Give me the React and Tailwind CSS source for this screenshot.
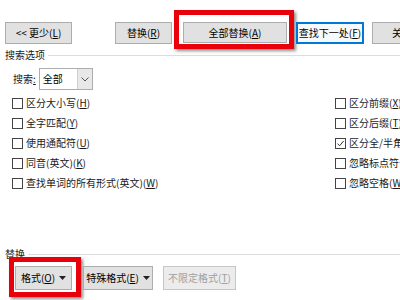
import React from "react";

const font = { fontFamily: '"Noto Sans CJK SC", "Noto Sans", sans-serif' };

function Btn({ children, className = "" }) {
  return (
    <div
      className={
        "flex shrink-0 items-center justify-center border border-[#adadad] bg-[#e1e1e1] text-[10px] text-black leading-none whitespace-nowrap " +
        className
      }
    >
      {children}
    </div>
  );
}

function Check({ label, checked }) {
  return (
    <div className="flex h-[20px] items-center whitespace-nowrap">
      <div className="flex h-[11px] w-[11px] shrink-0 items-center justify-center border border-[#444] bg-white">
        {checked && (
          <svg width="9" height="9" viewBox="0 0 9 9">
            <path d="M1.5 4.6 L3.6 6.8 L7.6 2" fill="none" stroke="#333" strokeWidth="1" />
          </svg>
        )}
      </div>
      <span className="ml-[3px] text-[10px] leading-none text-[#1a1a1a]">{label}</span>
    </div>
  );
}

function Caret() {
  return (
    <svg width="7" height="4" viewBox="0 0 7 4" className="ml-[4px]">
      <path d="M0 0 H7 L3.5 4 Z" fill="#222" />
    </svg>
  );
}

export default function App() {
  return (
    <div className="relative h-[300px] w-[400px] overflow-hidden bg-white" style={font}>
      {/* top buttons */}
      <div className="flex h-[49px] items-start">
        <Btn className="ml-[5px] mt-[22px] h-[22px] w-[67px]">
          &lt;&lt; 更少(<u>L</u>)
        </Btn>
        <Btn className="ml-[43px] mt-[22px] h-[22px] w-[57px]">
          替换(<u>R</u>)
        </Btn>
        <div className="ml-[2px] mt-[10px] shrink-0 border-[5px] border-[#e8000b] pb-[1px] pl-[4px] pr-[2px] pt-[7px] shadow-[2px_2px_3px_rgba(0,0,0,0.45)]">
          <Btn className="h-[21px] w-[104px]">
            全部替换(<u>A</u>)
          </Btn>
        </div>
        <div className="ml-[2px] mt-[22px] flex h-[22px] w-[68px] shrink-0 items-center justify-center border-2 border-[#0078d7] bg-[#f7fafd] text-[10px] leading-none whitespace-nowrap">
          查找下一处(<u>F</u>)
        </div>
        <Btn className="ml-[8px] mt-[22px] h-[22px] w-[60px]">
          关闭
        </Btn>
      </div>

      {/* search options header */}
      <div className="flex h-[12px] items-center pl-[5px]">
        <span className="text-[10px] leading-none text-[#1a1a1a]">搜索选项</span>
        <div className="ml-[3px] h-px flex-1 bg-[#dcdcdc]" />
      </div>

      {/* search select */}
      <div className="mt-[7px] flex h-[22px] items-center pl-[13px]">
        <span className="text-[10px] leading-none text-[#1a1a1a]">
          搜索<u>:</u>
        </span>
        <div className="ml-[3px] flex h-[22px] w-[54px] border border-[#adadad] bg-white">
          <div className="flex flex-1 items-center pl-[3px] text-[10px] leading-none">全部</div>
          <div className="flex w-[15px] items-center justify-center border-l border-[#cfcfcf] bg-[#e8e8e8]">
            <svg width="8" height="5" viewBox="0 0 8 5">
              <path d="M0.5 0.5 L4 4 L7.5 0.5" fill="none" stroke="#555" strokeWidth="1" />
            </svg>
          </div>
        </div>
      </div>

      {/* checkboxes */}
      <div className="mt-[3px] flex">
        <div className="flex flex-col pl-[12px]">
          <Check label={<>区分大小写(<u>H</u>)</>} />
          <Check label={<>全字匹配(<u>Y</u>)</>} />
          <Check label={<>使用通配符(<u>U</u>)</>} />
          <Check label={<>同音(英文)(<u>K</u>)</>} />
          <Check label={<>查找单词的所有形式(英文)(<u>W</u>)</>} />
        </div>
        <div className="ml-auto flex w-[65px] flex-col overflow-hidden">
          <Check label={<>区分前缀(<u>X</u>)</>} />
          <Check label={<>区分后缀(<u>T</u>)</>} />
          <Check label={<>区分全/半角(<u>M</u>)</>} checked />
          <Check label={<>忽略标点符号(<u>S</u>)</>} />
          <Check label={<>忽略空格(<u>W</u>)</>} />
        </div>
      </div>

      {/* replace header */}
      <div className="mt-[55px] flex h-[12px] items-center pl-[5px]">
        <span className="text-[10px] leading-none text-[#1a1a1a]">替换</span>
        <div className="ml-[3px] h-px flex-1 bg-[#dcdcdc]" />
      </div>

      {/* bottom buttons */}
      <div className="flex items-start">
        <div className="-mt-[3px] ml-[9px] shrink-0 border-[5px] border-[#e8000b] pb-[2px] pl-[1px] pr-[4px] pt-[4px] shadow-[2px_2px_3px_rgba(0,0,0,0.45)]">
          <Btn className="h-[24px] w-[57px]">
            格式(<u>O</u>)
            <Caret />
          </Btn>
        </div>
        <Btn className="ml-[2px] mt-[6px] h-[24px] w-[70px]">
          特殊格式(<u>E</u>)
          <Caret />
        </Btn>
        <div className="ml-[10px] mt-[6px] flex h-[24px] w-[73px] shrink-0 items-center justify-center border border-[#c6c6c6] bg-[#ececec] text-[10px] leading-none whitespace-nowrap text-[#a0a0a0]">
          不限定格式(<u>T</u>)
        </div>
      </div>
    </div>
  );
}
